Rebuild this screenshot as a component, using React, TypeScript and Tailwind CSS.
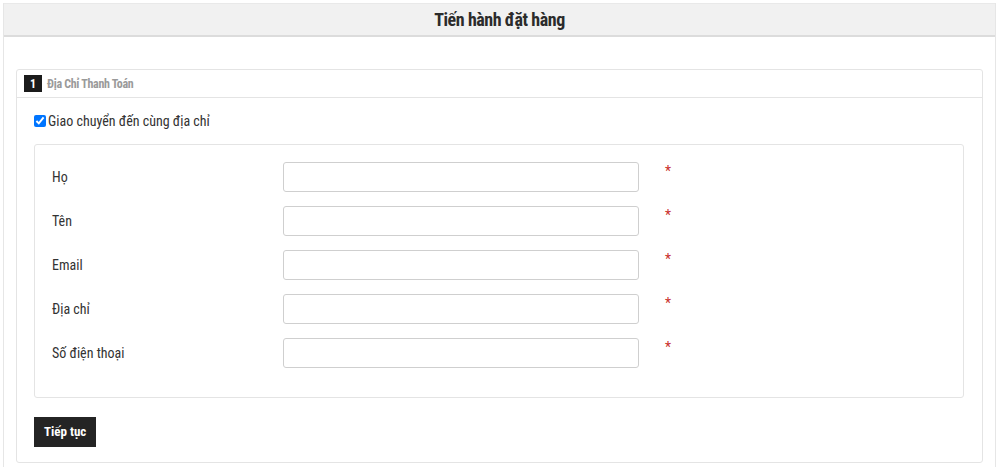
import React, { useState } from 'react';

const fields = ['Họ', 'Tên', 'Email', 'Địa chỉ', 'Số điện thoại'];

const font = { fontFamily: '"Roboto Condensed", "Liberation Sans Narrow", Roboto, "Liberation Sans", sans-serif' };

const CheckoutPage: React.FC = () => {
  const [sameAddress, setSameAddress] = useState(true);

  return (
    <div className="min-h-[467px] bg-white pt-[3px] px-[3px]" style={font}>
      <div className="w-[993px] min-h-[464px] border-x border-[#e6e6e6]">
        <div className="h-[34px] bg-[#f1f1f1] border-t border-[#e9e9e9] border-b-2 border-b-[#dcdcdc] flex items-center justify-center">
          <h1 className="text-[18px] font-bold text-[#2b2b2b] tracking-tight">Tiến hành đặt hàng</h1>
        </div>

        <div className="px-[12px] pt-[32px]">
          <div className="border border-[#e4e4e4] rounded-[3px]">
            <div className="h-[28px] flex items-center px-[7px] border-b border-[#e4e4e4]">
              <span className="w-[18px] h-[17px] bg-[#1b1b1b] text-white text-[12px] font-bold flex items-center justify-center">1</span>
              <span className="ml-[5px] text-[12px] font-bold text-[#9a9a9a] tracking-tight">Địa Chỉ Thanh Toán</span>
            </div>

            <div className="pl-[17px] pr-[18px] pt-[14px] pb-[15px]">
              <label className="flex items-center gap-[2px] text-[14px] text-[#333]">
                <input
                  type="checkbox"
                  checked={sameAddress}
                  onChange={e => setSameAddress(e.target.checked)}
                  className="w-[12px] h-[12px] m-0"
                />
                <span className="leading-[18px]">Giao chuyển đến cùng địa chỉ</span>
              </label>

              <div className="mt-[14px] border border-[#e4e4e4] rounded-[3px] pl-[17px] pt-[17px] pb-[29px] flex flex-col gap-[14px]">
                {fields.map(f => (
                  <div key={f} className="flex items-center">
                    <span className="w-[231px] text-[14px] text-[#333]">{f}</span>
                    <input
                      type="text"
                      className="w-[356px] h-[30px] border border-[#cfcfcf] rounded-[3px] bg-white"
                    />
                    <span className="ml-[26px] self-start -mt-[1px] text-[#c9302c] text-[14px]">*</span>
                  </div>
                ))}
              </div>

              <button className="mt-[19px] h-[30px] px-[10px] bg-[#242424] text-white text-[13px] font-bold">
                Tiếp tục
              </button>
            </div>
          </div>
        </div>
      </div>
    </div>
  );
};

export default function App() {
  return <CheckoutPage />;
}
